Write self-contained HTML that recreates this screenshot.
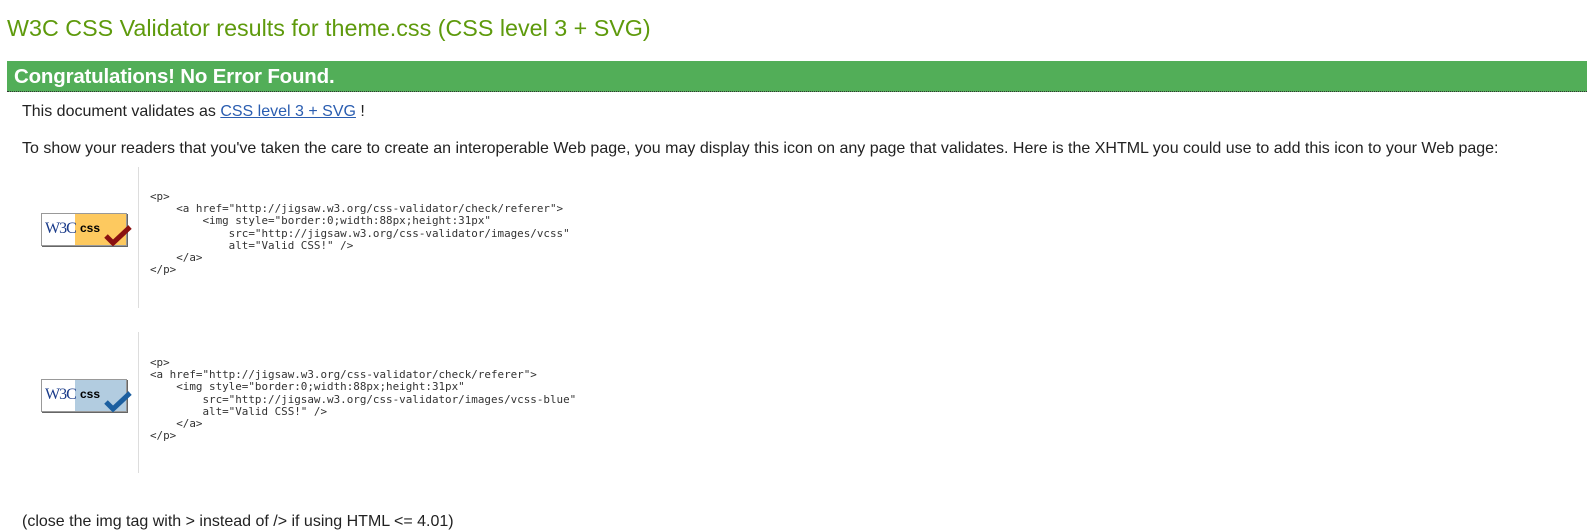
<!DOCTYPE html>
<html><head><style>
body{margin:0;width:1587px;height:523px;overflow:hidden;background:#fff;font-family:"Liberation Sans",Arial,sans-serif;position:relative}
.a{position:absolute;white-space:pre}
h1{position:absolute;left:7px;top:15px;margin:0;font-weight:normal;font-size:23.3px;color:#5e9a0c}
.bar{position:absolute;left:7px;top:61px;width:1580px;height:30px;background:#52ae58;border-bottom:1px dotted #333}
.bar span{position:absolute;left:7px;top:4px;color:#fff;font-weight:bold;font-size:20.5px;letter-spacing:-0.2px}
.t{font-size:16px;color:#222}
a{color:#2a5db0}
.vl{position:absolute;left:138px;width:1px;background:#ddd}
pre{position:absolute;left:150px;margin:0;font-family:"DejaVu Sans Mono","Liberation Mono",monospace;font-size:10.9px;line-height:12.2px;color:#333}
.badge{position:absolute;left:41px;width:84px;height:31px;border:1px solid #999;box-shadow:1px 1px 0 #666;background:#fff}
.badge .w{position:absolute;left:3px;top:6px;font:16px "Liberation Serif",serif;color:#1a3b8a;letter-spacing:-1px}
.badge .r{position:absolute;left:33px;top:0;width:51px;height:31px}
.badge .c{position:absolute;left:38px;top:7px;font:bold 12px "Liberation Sans",sans-serif;color:#000}
</style></head><body>
<h1>W3C CSS Validator results for theme.css (CSS level 3 + SVG)</h1>
<div class="bar"><span>Congratulations! No Error Found.</span></div>
<div class="a t" style="left:22px;top:103px">This document validates as <a href="#">CSS level 3 + SVG</a> !</div>
<div class="a t" style="left:22px;top:140px">To show your readers that you've taken the care to create an interoperable Web page, you may display this icon on any page that validates. Here is the XHTML you could use to add this icon to your Web page:</div>
<div class="vl" style="top:167px;height:141px"></div>
<div class="vl" style="top:332px;height:141px"></div>
<div class="badge" style="top:213px"><div class="r" style="background:#fdc95f"></div><span class="w">W3C</span><span class="c">css</span>
<svg style="position:absolute;left:62px;top:10px" width="28" height="22"><path d="M2 12 L9 19 L26 3" stroke="#8a1010" stroke-width="5" fill="none"/></svg></div>
<div class="badge" style="top:379px"><div class="r" style="background:#b2cce0"></div><span class="w">W3C</span><span class="c">css</span>
<svg style="position:absolute;left:62px;top:10px" width="28" height="22"><path d="M2 12 L9 19 L26 3" stroke="#1c5fa0" stroke-width="5" fill="none"/></svg></div>
<pre style="top:191px">&lt;p&gt;
    &lt;a href="http://jigsaw.w3.org/css-validator/check/referer"&gt;
        &lt;img style="border:0;width:88px;height:31px"
            src="http://jigsaw.w3.org/css-validator/images/vcss"
            alt="Valid CSS!" /&gt;
    &lt;/a&gt;
&lt;/p&gt;</pre>
<pre style="top:357px">&lt;p&gt;
&lt;a href="http://jigsaw.w3.org/css-validator/check/referer"&gt;
    &lt;img style="border:0;width:88px;height:31px"
        src="http://jigsaw.w3.org/css-validator/images/vcss-blue"
        alt="Valid CSS!" /&gt;
    &lt;/a&gt;
&lt;/p&gt;</pre>
<div class="a t" style="left:22px;top:513px">(close the img tag with &gt; instead of /&gt; if using HTML &lt;= 4.01)</div>
</body></html>
